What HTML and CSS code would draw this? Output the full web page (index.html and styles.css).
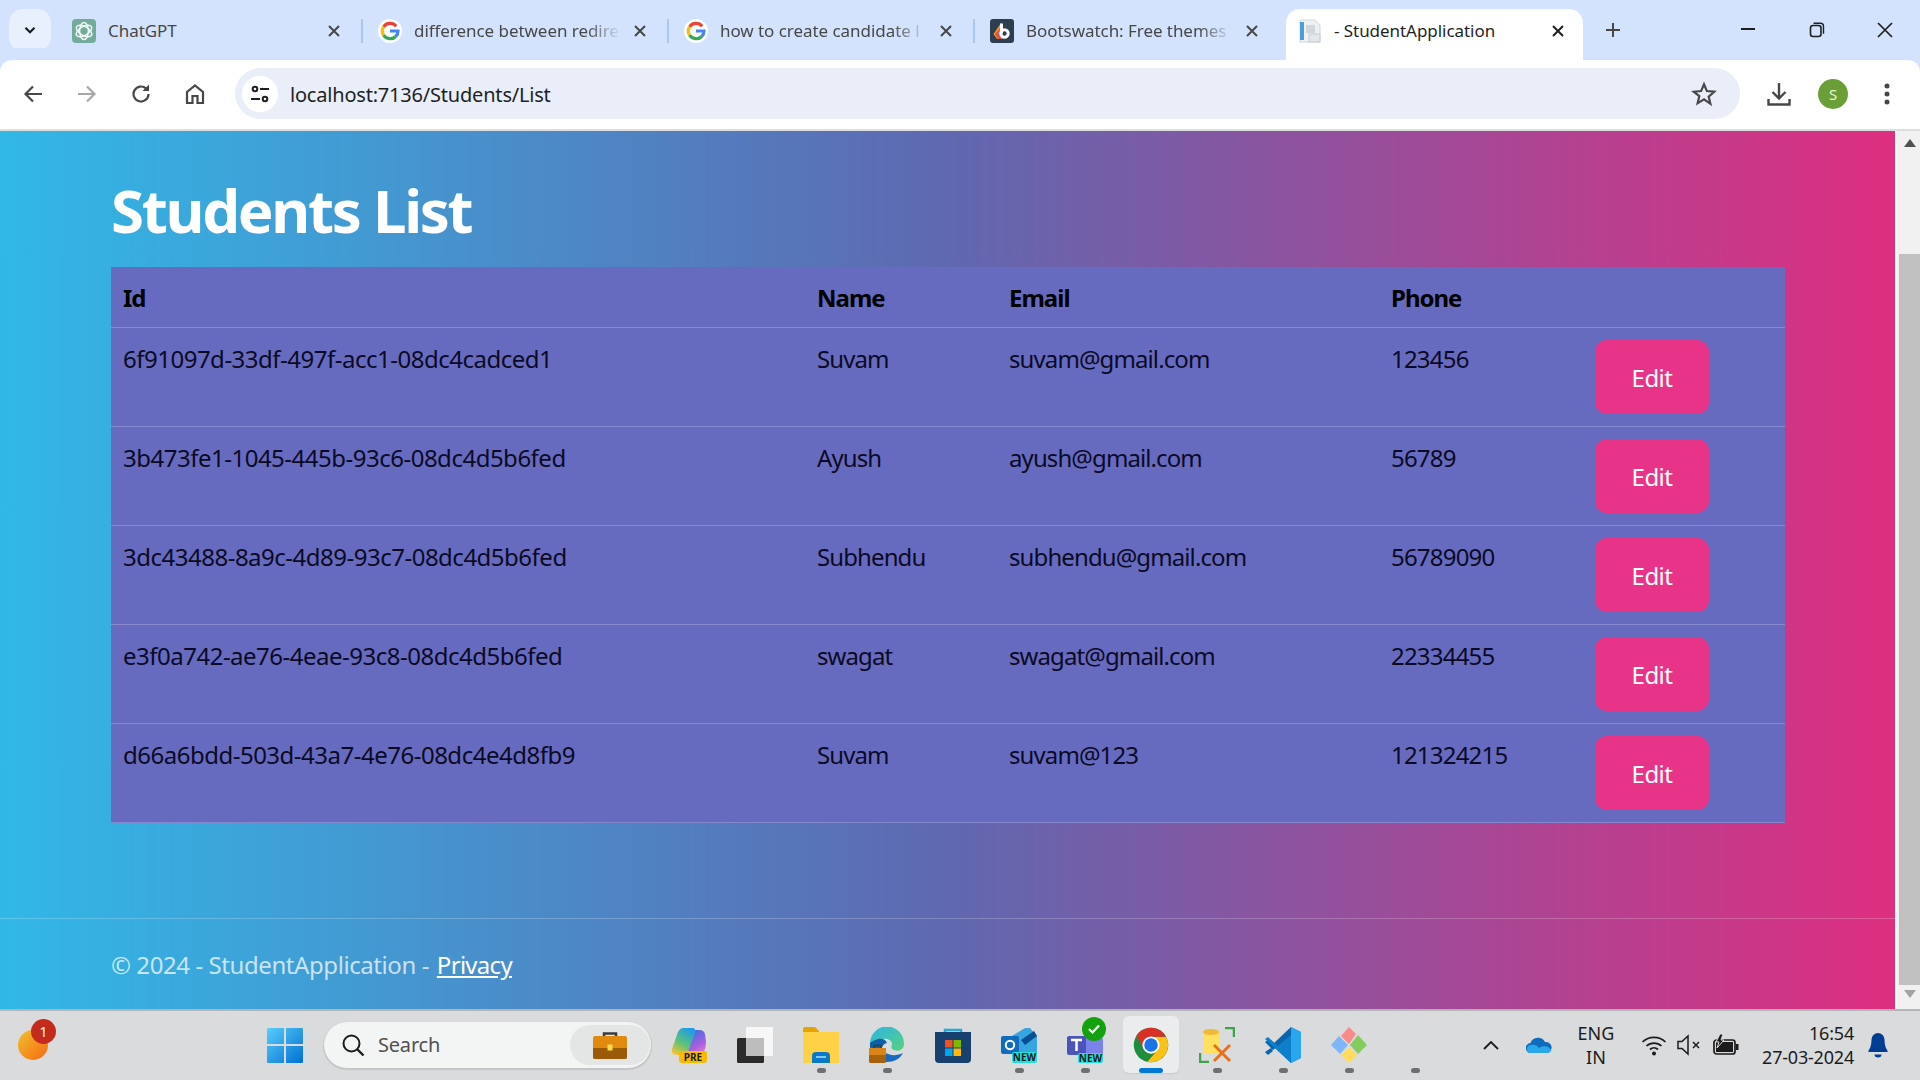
FILE: index.html
```html
<!DOCTYPE html>
<html lang="en">
<head>
  <meta charset="UTF-8" />
  <title>StudentApplication</title>
  <link rel="stylesheet" href="styles.css">
</head>
<body>
  <div class="tabstrip">
    <button class="tab-search"><svg width="16" height="16" viewBox="0 0 16 16"><path d="M3.5 5.8 8 10.2l4.5-4.4" fill="none" stroke="#1f1f1f" stroke-width="2.2"/></svg></button>

    <div class="tab">
      <svg class="favicon" viewBox="0 0 24 24"><rect width="24" height="24" rx="4" fill="#74aa9c"/><g fill="none" stroke="#eef6f3" stroke-width="1.5"><ellipse cx="12" cy="12" rx="4.4" ry="8.6"/><ellipse cx="12" cy="12" rx="4.4" ry="8.6" transform="rotate(60 12 12)"/><ellipse cx="12" cy="12" rx="4.4" ry="8.6" transform="rotate(120 12 12)"/></g></svg>
      <span class="tab-title">ChatGPT</span>
      <svg class="tab-close" viewBox="0 0 12 12"><path d="M1 1l10 10M11 1 1 11" stroke="#474747" stroke-width="2"/></svg>
    </div>
    <div class="tab">
      <svg class="favicon" viewBox="0 0 24 24"><circle cx="12" cy="12" r="12" fill="#fff"/><g fill="none" stroke-width="3.2"><path d="M18.2 7.2A8 8 0 0 0 5.6 7.8" stroke="#ea4335"/><path d="M5.6 7.8a8 8 0 0 0 0 8.4" stroke="#fbbc05"/><path d="M5.6 16.2a8 8 0 0 0 12.2 1.3" stroke="#34a853"/><path d="M17.8 17.5a8 8 0 0 0 2.2-5.5h-8" stroke="#4285f4"/></g></svg>
      <span class="tab-title fade">difference between redire</span>
      <svg class="tab-close" viewBox="0 0 12 12"><path d="M1 1l10 10M11 1 1 11" stroke="#474747" stroke-width="2"/></svg>
    </div>
    <div class="tab">
      <svg class="favicon" viewBox="0 0 24 24"><circle cx="12" cy="12" r="12" fill="#fff"/><g fill="none" stroke-width="3.2"><path d="M18.2 7.2A8 8 0 0 0 5.6 7.8" stroke="#ea4335"/><path d="M5.6 7.8a8 8 0 0 0 0 8.4" stroke="#fbbc05"/><path d="M5.6 16.2a8 8 0 0 0 12.2 1.3" stroke="#34a853"/><path d="M17.8 17.5a8 8 0 0 0 2.2-5.5h-8" stroke="#4285f4"/></g></svg>
      <span class="tab-title fade">how to create candidate l</span>
      <svg class="tab-close" viewBox="0 0 12 12"><path d="M1 1l10 10M11 1 1 11" stroke="#474747" stroke-width="2"/></svg>
    </div>
    <div class="tab no-sep">
      <svg class="favicon" viewBox="0 0 24 24"><rect width="24" height="24" rx="3" fill="#2c3e50"/><path d="M11 4 3.5 15 7 20h5z" fill="#f39c12"/><path d="M11 8 5 15l3 5h4z" fill="#e74c3c"/><path d="M11 4v8l-3 4z" fill="#3498db"/><path d="M11.5 4.5v10" stroke="#fff" stroke-width="3"/><circle cx="14.5" cy="14.5" r="3.7" fill="none" stroke="#fff" stroke-width="3"/></svg>
      <span class="tab-title fade">Bootswatch: Free themes</span>
      <svg class="tab-close" viewBox="0 0 12 12"><path d="M1 1l10 10M11 1 1 11" stroke="#474747" stroke-width="2"/></svg>
    </div>
    <div class="tab active">
      <svg class="favicon" viewBox="0 0 24 24"><path d="M2 1h15l5 5v17H2z" fill="#eef0f2" stroke="#d5d8dc"/><rect x="2" y="3" width="4" height="18" fill="#4a9fd8"/><rect x="8" y="6" width="9" height="8" fill="#d3d7dc"/><rect x="11" y="15" width="11" height="8" fill="#e3e7ec" stroke="#c6cbd1"/></svg>
      <span class="tab-title">- StudentApplication</span>
      <svg class="tab-close" viewBox="0 0 12 12"><path d="M1 1l10 10M11 1 1 11" stroke="#1f1f1f" stroke-width="2"/></svg>
    </div>

    <svg class="new-tab" width="18" height="18" viewBox="0 0 18 18"><path d="M9 2v14M2 9h14" stroke="#474747" stroke-width="2"/></svg>

    <div class="win-buttons">
      <svg width="16" height="16" viewBox="0 0 16 16"><path d="M1 7h14" stroke="#1f1f1f" stroke-width="2"/></svg>
      <svg width="16" height="16" viewBox="0 0 16 16"><rect x="1.5" y="3.5" width="10.5" height="11" rx="2.5" fill="none" stroke="#1f1f1f" stroke-width="1.6"/><path d="M4.5 1.2h7a3 3 0 0 1 3 3v7.5" fill="none" stroke="#1f1f1f" stroke-width="1.4"/></svg>
      <svg width="16" height="16" viewBox="0 0 16 16"><path d="M1 1l14 14M15 1 1 15" stroke="#1f1f1f" stroke-width="1.7"/></svg>
    </div>
  </div>

  <div class="toolbar">
    <div class="nav-icons">
      <svg width="22" height="22" viewBox="0 0 22 22"><path d="M20 11H4M11 3.5 3.5 11l7.5 7.5" fill="none" stroke="#474747" stroke-width="2.2"/></svg>
      <svg width="22" height="22" viewBox="0 0 22 22"><path d="M2 11h16M11 3.5l7.500 7.500-7.500 7.500" fill="none" stroke="#a8a8a8" stroke-width="2.2"/></svg>
      <svg width="22" height="22" viewBox="0 0 22 22"><path d="M18.500 11a7.500 7.500 0 1 1-2.300-5.400" fill="none" stroke="#474747" stroke-width="2.200"/><path d="M19 1.500V8h-6.500z" fill="#474747"/></svg>
      <svg width="22" height="22" viewBox="0 0 22 22"><path d="M3 20V9l8-6.500L19 9v11h-5.500v-7h-5v7z" fill="none" stroke="#474747" stroke-width="2.200"/></svg>
    </div>
    <div class="omnibox">
      <span class="site-info"><svg width="20" height="20" viewBox="0 0 20 20"><g fill="none" stroke="#1f1f1f" stroke-width="2"><circle cx="5" cy="5" r="2.300"/><path d="M10 5h9M1 15h9"/><circle cx="15" cy="15" r="2.300"/></g></svg></span>
      <span class="url">localhost:7136/Students/List</span>
      <svg class="star" width="26" height="26" viewBox="0 0 24 24"><path d="M12 3l2.700 6.300 6.800.6-5.200 4.500 1.600 6.700L12 17l-5.900 3.600 1.600-6.700L2.500 9.900l6.800-.6z" fill="none" stroke="#474747" stroke-width="2"/></svg>
    </div>
    <div class="tool-icons">
      <svg width="26" height="26" viewBox="0 0 26 26"><path d="M13 2v15M6.500 11l6.500 6.500 6.500-6.500" fill="none" stroke="#474747" stroke-width="2.400"/><path d="M2.500 18v5.500h21V18" fill="none" stroke="#474747" stroke-width="2.400"/></svg>
      <span class="avatar">S</span>
      <svg width="6" height="24" viewBox="0 0 6 24"><circle cx="3" cy="4" r="2.500" fill="#474747"/><circle cx="3" cy="12" r="2.500" fill="#474747"/><circle cx="3" cy="20" r="2.500" fill="#474747"/></svg>
    </div>
  </div>

  <div class="viewport">
    <main class="page">
      <div class="content">
        <h1>Students List</h1>
        <table>
          <colgroup>
            <col class="col-id"><col class="col-name"><col class="col-email"><col class="col-phone"><col>
          </colgroup>
          <thead>
            <tr><th>Id</th><th>Name</th><th>Email</th><th>Phone</th><th></th></tr>
          </thead>
          <tbody>
            <tr><td>6f91097d-33df-497f-acc1-08dc4cadced1</td><td>Suvam</td><td>suvam@gmail.com</td><td>123456</td><td><a class="btn-edit">Edit</a></td></tr>
            <tr><td>3b473fe1-1045-445b-93c6-08dc4d5b6fed</td><td>Ayush</td><td>ayush@gmail.com</td><td>56789</td><td><a class="btn-edit">Edit</a></td></tr>
            <tr><td>3dc43488-8a9c-4d89-93c7-08dc4d5b6fed</td><td>Subhendu</td><td>subhendu@gmail.com</td><td>56789090</td><td><a class="btn-edit">Edit</a></td></tr>
            <tr><td>e3f0a742-ae76-4eae-93c8-08dc4d5b6fed</td><td>swagat</td><td>swagat@gmail.com</td><td>22334455</td><td><a class="btn-edit">Edit</a></td></tr>
            <tr><td>d66a6bdd-503d-43a7-4e76-08dc4e4d8fb9</td><td>Suvam</td><td>suvam@123</td><td>121324215</td><td><a class="btn-edit">Edit</a></td></tr>
          </tbody>
        </table>
      </div>
      <footer>© 2024 - StudentApplication - <a>Privacy</a></footer>
    </main>
    <aside class="scrollbar">
      <svg width="12" height="8" viewBox="0 0 12 8"><path d="M6 0l6 8H0z" fill="#505050"/></svg>
      <div class="thumb"></div>
      <svg width="12" height="8" viewBox="0 0 12 8"><path d="M6 8 0 0h12z" fill="#a3a3a3"/></svg>
    </aside>
  </div>

  <div class="taskbar">
    <div class="weather">
      <span class="weather-badge">1</span>
    </div>
    <div class="start">
      <svg width="36" height="36" viewBox="0 0 36 36"><defs><linearGradient id="winGrad" x1="0" y1="0" x2="1" y2="1"><stop offset="0" stop-color="#58cdfb"/><stop offset="1" stop-color="#0070d0"/></linearGradient></defs><path d="M1 1h16v16H0V2zM19 1h16a1 1 0 0 1 1 1v15H19zM0 19h17v17H1a1 1 0 0 1-1-1zM19 19h17v16a1 1 0 0 1-1 1H19z" fill="url(#winGrad)"/></svg>
    </div>
    <div class="search">
      <svg width="24" height="24" viewBox="0 0 24 24"><circle cx="10.500" cy="10.500" r="8" fill="none" stroke="#1c1c1c" stroke-width="2"/><path d="M16.500 16.500l6 6" stroke="#1c1c1c" stroke-width="2.400"/></svg>
      <span class="search-text">Search</span>
      <span class="search-bubble">
        <svg width="34" height="28" viewBox="0 0 34 28"><path d="M11 6V2.500h12V6" fill="none" stroke="#3b3b3b" stroke-width="2.500"/><rect y="5" width="34" height="23" rx="2" fill="#e08a10"/><path d="M0 17h34v9a2 2 0 0 1-2 2H2a2 2 0 0 1-2-2z" fill="#9a5a08"/><rect x="14.500" y="13.500" width="5" height="6" fill="#f7dc4a"/></svg>
      </span>
    </div>

    <div class="apps">
      <div class="app">
        <svg width="36" height="36" viewBox="0 0 36 36"><defs><linearGradient id="copL" x1="0.700" y1="0" x2="0.200" y2="1"><stop offset="0" stop-color="#1f9be8"/><stop offset=".55" stop-color="#5cc27a"/><stop offset="1" stop-color="#f4c430"/></linearGradient><linearGradient id="copR" x1="0.300" y1="0" x2="0.800" y2="1"><stop offset="0" stop-color="#3a6fe0"/><stop offset=".6" stop-color="#a45fe0"/><stop offset="1" stop-color="#f07ac0"/></linearGradient></defs><path d="M22 3h7c2 0 4 1 5 4l1 8c0 5-1 9-4 12-2 2-4 1-7 1H14z" fill="url(#copR)"/><path d="M12 1h9c3 0 4 2 3 5l-7 19c-1 2-3 3-5 3H6c-4 0-6-3-5-6l6-17c1-2 3-4 5-4z" fill="url(#copL)"/><rect x="8" y="24" width="28" height="12" rx="3" fill="#f9bb00"/><text class="badge-text" x="22" y="33.500">PRE</text></svg>
      </div>
      <div class="app">
        <svg width="36" height="36" viewBox="0 0 36 36"><rect x="9" width="27" height="29" fill="#f7f7f7"/><rect y="11" width="27" height="25" rx="1.500" fill="#2b2b2b"/><rect x="9" y="11" width="18" height="18" fill="#bdbdbd"/></svg>
      </div>
      <div class="app open">
        <svg width="36" height="36" viewBox="0 0 36 36"><path d="M0 2a2 2 0 0 1 2-2h10l4 4v4H0z" fill="#e5a400"/><path d="M0 5h36v31H0z" fill="#ffd147"/><path d="M9 36v-7a4 4 0 0 1 4-4h10a4 4 0 0 1 4 4v7z" fill="#0b79c9"/><rect x="13" y="29" width="10" height="2" fill="#7fc5f0"/></svg>
      </div>
      <div class="app open">
        <svg width="36" height="36" viewBox="0 0 36 36"><defs><linearGradient id="edgeGrad" x1="0" y1="0" x2="1" y2="1"><stop offset="0" stop-color="#2cb4e8"/><stop offset="1" stop-color="#58d27c"/></linearGradient></defs><path d="M1 16A17 17 0 0 1 35 17c0 6-6 8-10 6-4-1-2-5-2-6 0-3-4-6-9-5-6 1-10 5-13 4z" fill="url(#edgeGrad)"/><path d="M1 16c3-3 14-8 17 0-5 1-7 7-4 13 3 3 5 6 4 6C8 35 0 26 1 16z" fill="#0c60aa"/><path d="M18 35c7 0 13-3 16-9-6 3-14 3-18-1 0 4 0 8 2 10z" fill="#176cc0"/><rect y="21" width="17" height="15" rx="1.500" fill="#a8620b"/><rect y="21" width="17" height="7" fill="#d9851a"/><path d="M5 21v-2.500h7V21" fill="none" stroke="#3b3b3b" stroke-width="1.500"/></svg>
      </div>
      <div class="app">
        <svg width="36" height="36" viewBox="0 0 36 36"><path d="M10 9V3h16v6" fill="none" stroke="#2aa5e0" stroke-width="2.500"/><path d="M0 5h36v27a4 4 0 0 1-4 4H4a4 4 0 0 1-4-4z" fill="#18406f"/><rect x="10" y="13" width="7.500" height="7.500" fill="#f25022"/><rect x="18.500" y="13" width="7.500" height="7.500" fill="#7fba00"/><rect x="10" y="21.500" width="7.500" height="7.500" fill="#00a4ef"/><rect x="18.500" y="21.500" width="7.500" height="7.500" fill="#ffb900"/></svg>
      </div>
      <div class="app open">
        <svg width="36" height="36" viewBox="0 0 36 36"><path d="M6 12 24 1h5l7 8v18H11z" fill="#36a5e0"/><path d="M20 13 33 4l3 5-12 9z" fill="#0a4f94"/><rect y="9" width="18" height="18" rx="2" fill="#0f6cbd"/><circle cx="9" cy="18" r="4.200" fill="none" stroke="#fff" stroke-width="2"/><rect x="11" y="25" width="25" height="11" rx="2" fill="#22e0dc"/><text class="badge-text" x="23.500" y="34">NEW</text></svg>
      </div>
      <div class="app open">
        <svg width="36" height="36" viewBox="0 0 36 36"><rect x="12" y="10" width="24" height="22" rx="3" fill="#7b83eb"/><circle cx="28" cy="6" r="5" fill="#6264a7"/><rect y="9" width="19" height="19" rx="2" fill="#4b53bc"/><path d="M4 13h11M9.500 13v11" stroke="#fff" stroke-width="2.500"/><rect x="11" y="26" width="25" height="10" rx="2" fill="#22e0dc"/><text class="badge-text" x="23.500" y="34.500">NEW</text></svg>
        <span class="teams-check"><svg width="14" height="12" viewBox="0 0 14 12"><path d="M2 6l3.500 3.500L12 2.500" fill="none" stroke="#fff" stroke-width="2.200"/></svg></span>
      </div>
      <div class="app running">
        <svg width="36" height="36" viewBox="0 0 48 48"><circle cx="24" cy="24" r="23" fill="#1e8e3e"/><path d="M24 13H44A23 23 0 0 1 19 46.500L33.500 29.500z" fill="#fbc116"/><path d="M4.500 11.500A23 23 0 0 1 44 13H24L14.500 29.500z" fill="#d93025"/><circle cx="24" cy="24" r="11.500" fill="#fff"/><circle cx="24" cy="24" r="9" fill="#1a73e8"/></svg>
      </div>
      <div class="app open">
        <svg width="36" height="36" viewBox="0 0 36 36"><path d="M26 1h9v9M1 26v9h9" fill="none" stroke="#3fa34d" stroke-width="2.500"/><path d="M4 5c0-4 16-4 16 0v22H4z" fill="#ffe15f"/><path d="M4 5c0-4 16-4 16 0s-16 4-16 0z" fill="#f0b93a"/><path d="M15 18l16 16M31 18 15 34" stroke="#e8701a" stroke-width="3"/></svg>
      </div>
      <div class="app open">
        <svg width="36" height="36" viewBox="0 0 36 36"><path d="M26 0 36 5v26l-10 5L9 20l17-14z" fill="#0f7fcb"/><path d="M26 0 36 5v26l-10 5z" fill="#2aa6ee"/><path d="M26 0 8 17l-5-4-3 2 8 8 18-15zM3 23l-3 2 3 3 5-4-2-3z" fill="#0865ae"/><path d="M0 12l3-2 23 21v5z" fill="#0f7fcb"/></svg>
      </div>
      <div class="app open">
        <svg width="36" height="36" viewBox="0 0 36 36"><path d="M18 0l7 7-7 10-8-8z" fill="#f98a8a"/><path d="M27 8l9 10-9 9-8-9z" fill="#84cc5e"/><path d="M8 9l9 9-8 9-9-9z" fill="#7eb6f8"/><path d="M18 20l8 8-8 8-8-8z" fill="#ffdc5e"/></svg>
      </div>
      <div class="app open"></div>
    </div>

    <div class="tray">
      <svg class="tray-chevron" width="16" height="10" viewBox="0 0 16 10"><path d="M1 9l7-7 7 7" fill="none" stroke="#1c1c1c" stroke-width="1.800"/></svg>
      <svg class="tray-cloud" width="26" height="17" viewBox="0 0 26 17"><path d="M5 17a5 5 0 0 1-.5-10A8 8 0 0 1 19 6a5.500 5.500 0 0 1 2 11z" fill="#0f6cbd"/><path d="M5 17a4 4 0 0 1 0-8c3-1 6 0 8 3 3-2 9-3 12 2 0 2-2 3-4 3z" fill="#28a8ea"/></svg>
      <div class="lang">ENG<br>IN</div>
      <svg class="tray-wifi" width="26" height="22" viewBox="0 0 26 22"><g fill="none" stroke="#1c1c1c" stroke-width="1.700"><path d="M1.500 8a16.500 16.500 0 0 1 23 0"/><path d="M5.500 12a11 11 0 0 1 15 0"/><path d="M9 15.500a6 6 0 0 1 8 0"/></g><circle cx="13" cy="19.500" r="2" fill="#1c1c1c"/></svg>
      <svg class="tray-vol" width="24" height="22" viewBox="0 0 24 22"><path d="M1 7.500h4L11 2v18l-6-5.500H1z" fill="none" stroke="#1c1c1c" stroke-width="1.500"/><path d="M16 8l6 6M22 8l-6 6" stroke="#1c1c1c" stroke-width="1.500"/></svg>
      <svg class="tray-bat" width="26" height="22" viewBox="0 0 26 22"><rect x="1" y="6" width="21" height="14" rx="2.500" fill="none" stroke="#1c1c1c" stroke-width="1.700"/><rect x="3" y="8" width="17" height="10" fill="#1c1c1c"/><rect x="23" y="10" width="2.500" height="6" fill="#1c1c1c"/><path d="M7 0 3 8h3l-2 6 7-8H8l2-6z" fill="#1c1c1c" stroke="#dadbdd"/></svg>
      <div class="clock">16:54<br>27-03-2024</div>
      <svg class="tray-bell" width="20" height="26" viewBox="0 0 20 26"><path d="M10 1a6.500 6.500 0 0 0-6.500 6.500c0 6-1.500 9-3 11v1.500h19v-1.500c-1.500-2-3-5-3-11A6.500 6.500 0 0 0 10 1z" fill="#003e92"/><path d="M6.500 22.500h7a3.500 3 0 0 1-7 0z" fill="#003e92"/></svg>
    </div>
  </div>
</body>
</html>
```

FILE: styles.css
```css
* {
  box-sizing: border-box;
}

html, body {
  height: 100%;
}

body {
  margin: 0;
  height: 1080px;
  overflow: hidden;
  display: flex;
  flex-direction: column;
  font-family: "Noto Sans", "Open Sans", sans-serif;
  color: #1f1f1f;
}

/* Browser tabs */
.tabstrip {
  height: 60px;
  flex: none;
  display: flex;
  align-items: flex-end;
  padding-left: 9px;
  background: #d3e3fd;
}

.tab-search {
  width: 42px;
  height: 42px;
  margin: 0 9px 9px 0;
  padding: 0;
  border: none;
  border-radius: 14px;
  background: #e9f0fd;
  display: flex;
  align-items: center;
  justify-content: center;
}

.tab {
  width: 306px;
  height: 51px;
  padding: 0 26px 8px 12px;
  flex: none;
  display: flex;
  align-items: center;
  position: relative;
  font-size: 17px;
  color: #474747;
}

.tab::after {
  content: "";
  position: absolute;
  right: 3px;
  top: 10px;
  height: 24px;
  width: 2px;
  background: #a9c6f5;
}

.tab.no-sep::after,
.tab.active::after {
  display: none;
}

.tab.active {
  width: 297px;
  margin-left: 2px;
  padding-right: 19px;
  background: #fff;
  color: #1f1f1f;
  border-radius: 14px 14px 0 0;
}

.favicon {
  width: 24px;
  height: 24px;
  flex: none;
  margin-right: 12px;
}

.tab-title {
  flex: 1;
  white-space: nowrap;
  letter-spacing: -0.05px;
}

.tab-title.fade {
  -webkit-mask-image: linear-gradient(to right, #000 78%, transparent 94%);
  mask-image: linear-gradient(to right, #000 78%, transparent 94%);
}

.tab-close {
  width: 12px;
  height: 12px;
  flex: none;
}

.new-tab {
  margin: 0 0 21px 21px;
}

.win-buttons {
  margin-left: auto;
  height: 60px;
  width: 180px;
  padding: 0 27px 0 0;
  display: flex;
  align-items: center;
  justify-content: space-between;
}

/* Address bar */
.toolbar {
  height: 71px;
  flex: none;
  display: flex;
  align-items: center;
  padding-bottom: 2px;
  background: #fff;
  border-bottom: 2px solid #dcdedf;
  border-radius: 12px 12px 0 0;
  margin-top: 0;
  box-shadow: 0 -12px 0 #d3e3fd;
}

.nav-icons {
  width: 235px;
  padding: 0 29px 0 22px;
  display: flex;
  justify-content: space-between;
}

.omnibox {
  width: 1505px;
  height: 51px;
  padding: 0 23px 0 7px;
  display: flex;
  align-items: center;
  border-radius: 26px;
  background: #e9eef8;
}

.site-info {
  width: 36px;
  height: 36px;
  margin-right: 12px;
  border-radius: 50%;
  background: #fff;
  display: flex;
  align-items: center;
  justify-content: center;
}

.url {
  flex: 1;
  padding-top: 1px;
  font-size: 20px;
  letter-spacing: -0.2px;
}

.tool-icons {
  flex: 1;
  padding: 0 30px 0 26px;
  display: flex;
  align-items: center;
  justify-content: space-between;
}

.avatar {
  width: 30px;
  height: 30px;
  margin-right: 10px;
  border-radius: 50%;
  background: #6a9f37;
  color: #e8f2dc;
  font-size: 15px;
  display: flex;
  align-items: center;
  justify-content: center;
}

/* Page */
.viewport {
  height: 878px;
  flex: none;
  display: flex;
}

.page {
  flex: 1;
  display: flex;
  flex-direction: column;
  background: linear-gradient(90deg, #31b8e7 0%, #5f68b0 50%, #de2e80 100%);
}

.content {
  flex: 1;
  padding: 0 110px 0 111px;
}

h1 {
  margin: 0;
  padding-top: 43px;
  height: 136px;
  font-size: 60px;
  font-weight: 700;
  line-height: 72px;
  letter-spacing: -2.3px;
  color: #fff;
}

table {
  width: 1674px;
  table-layout: fixed;
  border-collapse: collapse;
  background: #676bc0;
  font-size: 24px;
  line-height: 38px;
  color: #0b0a24;
}

.col-id { width: 695px; }
.col-name { width: 192px; }
.col-email { width: 382px; }
.col-phone { width: 204px; }

th, td {
  padding: 12px 11px;
  text-align: left;
  vertical-align: top;
  border-bottom: 1px solid #8587cf;
  letter-spacing: -0.9px;
  white-space: nowrap;
}

td:first-child {
  padding-left: 12px;
  letter-spacing: -0.5px;
}

td:nth-child(4) {
  letter-spacing: -0.8px;
}

th {
  padding-bottom: 10px;
  font-weight: 700;
  letter-spacing: -1px;
  color: #000;
}

th:first-child {
  padding-left: 12px;
}

.btn-edit {
  width: 114px;
  height: 74px;
  padding-top: 2px;
  display: flex;
  align-items: center;
  justify-content: center;
  border-radius: 12px;
  background: #e83488;
  letter-spacing: -0.55px;
  color: #fff;
}

footer {
  height: 91px;
  padding: 0 111px;
  border-top: 1px solid rgba(255, 255, 255, 0.22);
  font-size: 24px;
  line-height: 91px;
  letter-spacing: -0.42px;
  color: rgba(255, 255, 255, 0.72);
}

footer a {
  margin-left: 2px;
  letter-spacing: -0.7px;
  color: #fff;
  text-decoration: underline;
}

.scrollbar {
  width: 25px;
  padding: 8px 0 11px 2px;
  display: flex;
  flex-direction: column;
  align-items: center;
  border-left: 2px solid #fff;
  background: #f1f1f1;
}

.thumb {
  width: 100%;
  flex: 1;
  margin: 107px 0 5px;
  background: #c1c1c1;
}

/* Windows taskbar */
.taskbar {
  height: 71px;
  flex: none;
  display: flex;
  align-items: center;
  padding: 0 0 2px 18px;
  background: #dadbdd;
  border-top: 2px solid #b4b5b6;
}

.weather {
  width: 30px;
  height: 30px;
  flex: none;
  border-radius: 50%;
  background: linear-gradient(135deg, #f0c030, #f56a10);
  position: relative;
}

.weather-badge {
  position: absolute;
  left: 13px;
  top: -11px;
  width: 25px;
  height: 25px;
  border-radius: 50%;
  background: #c42b1c;
  color: #fff;
  font-size: 14px;
  display: flex;
  align-items: center;
  justify-content: center;
}

.start {
  width: 36px;
  margin: 0 21px 0 219px;
  display: flex;
  flex: none;
}

.search {
  width: 327px;
  height: 46px;
  flex: none;
  padding: 0 1px 0 17px;
  display: flex;
  align-items: center;
  border-radius: 23px;
  background: #f3f4f4;
  box-shadow: 0 1px 1px 1px #c3c4c5;
}

.search-text {
  flex: 1;
  margin-left: 13px;
  font-size: 20px;
  letter-spacing: -0.2px;
  color: #505050;
}

.search-bubble {
  width: 80px;
  height: 40px;
  border-radius: 20px;
  background: #e4e5e5;
  display: flex;
  align-items: center;
  justify-content: center;
}

.apps {
  display: flex;
  margin-left: 5px;
  flex: none;
}

.app {
  width: 66px;
  height: 57px;
  display: flex;
  align-items: center;
  justify-content: center;
  position: relative;
}

.app.open::after {
  content: "";
  position: absolute;
  left: 29px;
  bottom: 0;
  width: 9px;
  height: 5px;
  border-radius: 3px;
  background: #6e6f70;
}

.app.running {
  width: 56px;
  margin: 0 5px;
  border-radius: 6px;
  background: #ebecee;
  box-shadow: 0 1px 1px #c8c9ca;
}

.app.running::after {
  content: "";
  position: absolute;
  left: 16px;
  bottom: 0;
  width: 24px;
  height: 5px;
  border-radius: 3px;
  background: #0078d4;
}

.badge-text {
  font-family: "Noto Sans", sans-serif;
  font-size: 10px;
  font-weight: 700;
  text-anchor: middle;
  fill: #1a1a1a;
}

.teams-check {
  position: absolute;
  left: 30px;
  top: 1px;
  width: 24px;
  height: 24px;
  border-radius: 50%;
  background: #13a10e;
  display: flex;
  align-items: center;
  justify-content: center;
}

.tray {
  margin-left: 35px;
  flex: 1;
  display: flex;
  align-items: center;
  font-size: 18px;
  line-height: 24px;
  color: #1c1c1c;
}

.tray-chevron { margin-right: 27px; }
.tray-cloud { margin-right: 14px; }

.lang {
  width: 60px;
  margin-right: 15px;
  text-align: center;
}

.tray-wifi { margin-right: 10px; }
.tray-vol { margin-right: 12px; }

.clock {
  margin-left: auto;
  text-align: right;
  letter-spacing: -0.2px;
}

.tray-bell {
  margin: 0 32px 0 14px;
}
```
